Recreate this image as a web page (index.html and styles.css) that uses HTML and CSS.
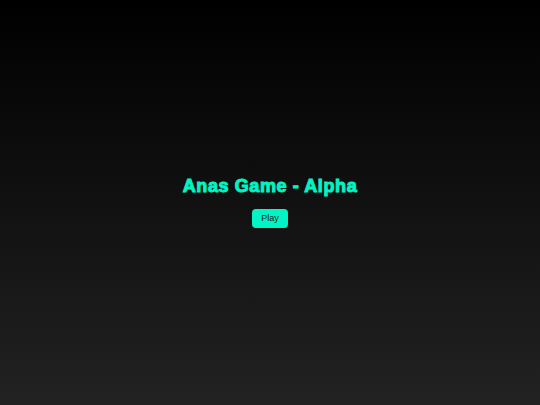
FILE: index.html
```html
<!DOCTYPE html>
<html>
<head>
<meta charset="utf-8">
<link rel="stylesheet" href="styles.css">
</head>
<body>
<main class="screen">
  <h1 class="title">Anas Game - Alpha</h1>
  <button class="play">Play</button>
</main>
</body>
</html>
```
FILE: styles.css
```css
html, body { margin: 0; padding: 0; height: 100%; }
body {
  background: linear-gradient(to bottom, #000000, #222222);
  font-family: "Liberation Sans", Arial, sans-serif;
}
.screen {
  height: 100%;
  display: flex;
  flex-direction: column;
  align-items: center;
  justify-content: center;
  gap: 12px;
  padding-bottom: 2px;
  box-sizing: border-box;
}
.title {
  margin: 0;
  color: #00f5c4;
  font-size: 18px;
  font-weight: 900;
  letter-spacing: 0.6px;
  -webkit-text-stroke: 1px #00f5c4;
}
.play {
  background: #00f5c4;
  color: #1a1a1a;
  border: none;
  border-radius: 4px;
  font-family: "Liberation Sans", Arial, sans-serif;
  font-size: 9px;
  width: 36px;
  height: 19px;
  padding: 0;
}
```
